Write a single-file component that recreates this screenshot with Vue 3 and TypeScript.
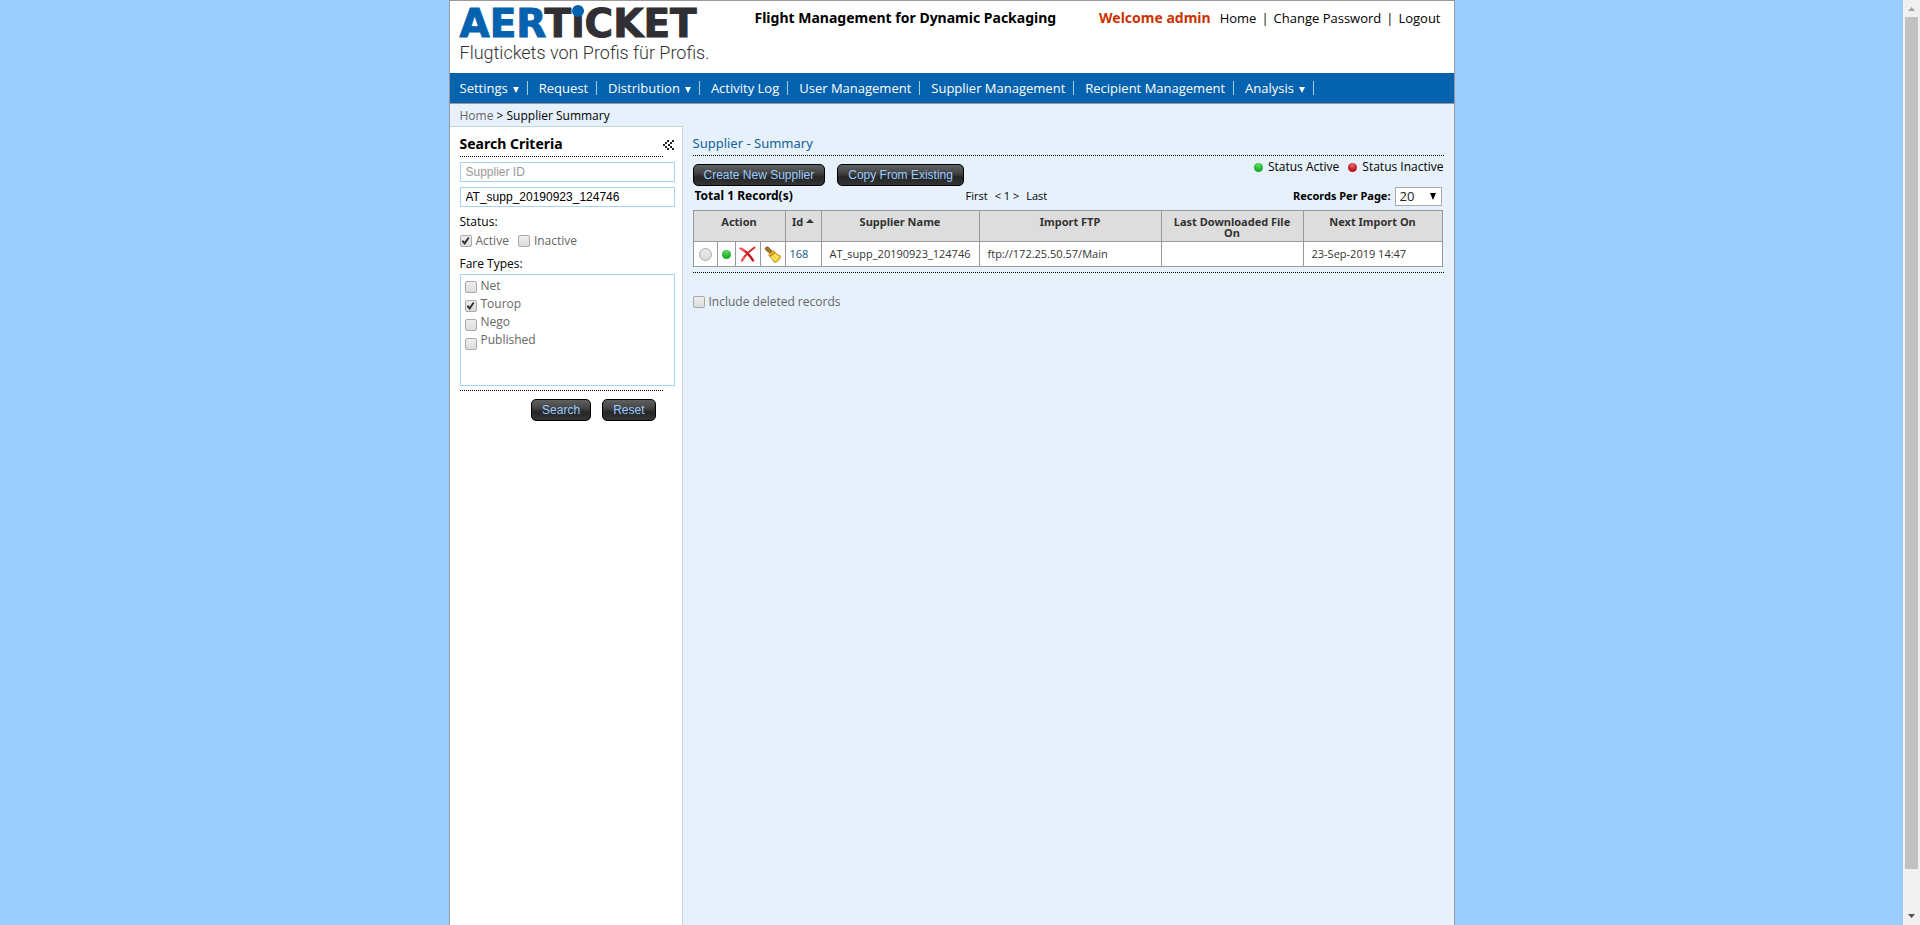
<script setup lang="ts">
import { ref } from 'vue'

interface NavItem {
  label: string
  menu?: boolean
}
interface Option {
  id: string
  label: string
  checked: boolean
}

const navItems: NavItem[] = [
  { label: 'Settings', menu: true },
  { label: 'Request' },
  { label: 'Distribution', menu: true },
  { label: 'Activity Log' },
  { label: 'User Management' },
  { label: 'Supplier Management' },
  { label: 'Recipient Management' },
  { label: 'Analysis', menu: true },
]

const supplierId = ref('')
const supplierName = ref('AT_supp_20190923_124746')
const pageSize = ref('20')
const includeDeleted = ref(false)

const statuses = ref<Option[]>([
  { id: 'status-active', label: 'Active', checked: true },
  { id: 'status-inactive', label: 'Inactive', checked: false },
])
const fareTypes = ref<Option[]>([
  { id: 'fare-net', label: 'Net', checked: false },
  { id: 'fare-tourop', label: 'Tourop', checked: true },
  { id: 'fare-nego', label: 'Nego', checked: false },
  { id: 'fare-published', label: 'Published', checked: false },
])

const suppliers = [
  { id: 168, name: 'AT_supp_20190923_124746', ftp: 'ftp://172.25.50.57/Main', last: '', next: '23-Sep-2019 14:47' },
]
</script>

<template>
  <div class="screen">
    <div class="viewport">
      <div class="page">
        <header class="top">
          <div class="brand">
            <div class="logo"><span class="logo-blue">AER</span>T<span class="logo-i">i</span>CKET</div>
            <div class="tagline">Flugtickets von Profis für Profis.</div>
          </div>
          <h1>Flight Management for Dynamic Packaging</h1>
          <div class="account">
            <strong>Welcome admin</strong>
            <a href="#">Home</a><span>|</span><a href="#">Change Password</a><span>|</span><a href="#">Logout</a>
          </div>
        </header>

        <nav class="menu">
          <a v-for="item in navItems" :key="item.label" href="#">{{ item.label }}<i v-if="item.menu" class="caret"></i></a>
        </nav>

        <div class="crumbs"><a href="#">Home</a> &gt; Supplier Summary</div>

        <div class="columns">
          <aside>
            <form @submit.prevent>
              <div class="criteria-head">
                <h2>Search Criteria</h2>
                <button type="button" class="collapse" aria-label="Collapse">
                  <svg width="11" height="11" viewBox="0 0 11 11" fill="#222">
                    <path d="M4 0h2v2h-2zM2 2h2v2h-2zM0 4h2v2h-2zM2 6h2v2h-2zM4 8h2v2h-2zM9 0h2v2h-2zM7 2h2v2h-2zM5 4h2v2h-2zM7 6h2v2h-2zM9 8h2v2h-2z" />
                  </svg>
                </button>
              </div>
              <input v-model="supplierId" class="field" type="text" placeholder="Supplier ID" aria-label="Supplier ID" />
              <input v-model="supplierName" class="field" type="text" aria-label="Supplier name" />
              <div class="group-label">Status:</div>
              <div class="statuses">
                <label v-for="s in statuses" :key="s.id" :for="s.id"><input :id="s.id" v-model="s.checked" type="checkbox" />{{ s.label }}</label>
              </div>
              <div class="group-label">Fare Types:</div>
              <div class="fares">
                <div class="fare-boxes">
                  <input v-for="f in fareTypes" :id="f.id" :key="f.id" v-model="f.checked" type="checkbox" />
                </div>
                <div class="fare-names">
                  <label v-for="f in fareTypes" :key="f.id" :for="f.id">{{ f.label }}</label>
                </div>
              </div>
              <div class="criteria-foot">
                <button class="dark" type="submit">Search</button>
                <button class="dark" type="reset">Reset</button>
              </div>
            </form>
          </aside>

          <main>
            <h2 class="title">Supplier - Summary</h2>
            <div class="toolbar">
              <button class="dark" type="button">Create New Supplier</button>
              <button class="dark" type="button">Copy From Existing</button>
              <div class="legend">
                <span><i class="dot green"></i>Status Active</span>
                <span><i class="dot red"></i>Status Inactive</span>
              </div>
            </div>
            <div class="pager">
              <strong>Total 1 Record(s)</strong>
              <div class="pages"><a href="#">First</a><span>&lt; 1 &gt;</span><a href="#">Last</a></div>
              <div class="size">
                <label for="page-size">Records Per Page:</label>
                <span class="select">
                  <select id="page-size" v-model="pageSize">
                    <option>20</option>
                    <option>50</option>
                  </select>
                </span>
              </div>
            </div>
            <table>
              <colgroup>
                <col class="c-radio" /><col class="c-dot" /><col class="c-icon" /><col class="c-icon" />
                <col class="c-id" /><col class="c-name" /><col /><col class="c-last" /><col class="c-next" />
              </colgroup>
              <thead>
                <tr>
                  <th colspan="4">Action</th>
                  <th>Id<i class="sort"></i></th>
                  <th>Supplier Name</th>
                  <th>Import FTP</th>
                  <th>Last Downloaded File On</th>
                  <th>Next Import On</th>
                </tr>
              </thead>
              <tbody>
                <tr v-for="s in suppliers" :key="s.id">
                  <td class="act"><input type="radio" name="supplier" :aria-label="s.name" /></td>
                  <td class="act"><i class="dot green"></i></td>
                  <td class="act">
                    <button type="button" aria-label="Delete">
                      <svg width="17" height="17" viewBox="0 0 17 17" fill="none" stroke-linecap="round">
                        <path d="M3.500 3.500C7 5.500 11 9.500 14 14.500" stroke="#c9141c" stroke-width="2.400" />
                        <path d="M15.500 1.500C12 4 6 9 3 14.500" stroke="#d8242a" stroke-width="2" />
                        <path d="M1.500 2.500L5 4.500M3 14.500L5 11.500" stroke="#ee5a5a" stroke-width="2.200" />
                      </svg>
                    </button>
                  </td>
                  <td class="act">
                    <button type="button" aria-label="Clean">
                      <svg width="17" height="17" viewBox="0 0 17 17">
                        <path d="M1.500 1.800L3.800 .8L8.300 5.200L6 7.300L1.300 3.500Z" fill="#a8741c" stroke="#73480c" stroke-width=".8" />
                        <path d="M4.600 8.600L9.500 4.500L11 6.300C12 8 14 9 16.300 9.800C16.500 13 14 16 10 16.300C9 13.500 7.500 11.500 5.600 10.800Z" fill="#f3d12c" stroke="#a8801a" stroke-width=".8" />
                        <path d="M6 9.800L11 6.200" stroke="#c43a1c" stroke-width="1" />
                        <path d="M8.500 10.500L11.500 14.500M11 9L14 12.500" stroke="#fff08a" stroke-width="1.200" />
                      </svg>
                    </button>
                  </td>
                  <td class="id"><a href="#">{{ s.id }}</a></td>
                  <td>{{ s.name }}</td>
                  <td>{{ s.ftp }}</td>
                  <td>{{ s.last }}</td>
                  <td>{{ s.next }}</td>
                </tr>
              </tbody>
            </table>
            <div class="rule"></div>
            <label class="deleted" for="deleted"><input id="deleted" v-model="includeDeleted" type="checkbox" />Include deleted records</label>
          </main>
        </div>
      </div>
    </div>
    <div class="scrollbar" aria-hidden="true">
      <svg width="17" height="17" viewBox="0 0 17 17"><path d="M5 11L8.500 7L12 11Z" fill="#a3a3a3" /></svg>
      <div class="thumb"></div>
      <svg width="17" height="17" viewBox="0 0 17 17"><path d="M5 6L8.500 10L12 6Z" fill="#505050" /></svg>
    </div>
  </div>
</template>

<style>
body { margin: 0; background: #99ccff; }
</style>

<style scoped>
* { box-sizing: border-box; }
.screen {
  display: flex;
  height: 100vh;
  overflow: hidden;
  background: #99ccff;
  font-family: "Open Sans", "Noto Sans", sans-serif;
  font-size: 11px;
  line-height: 16px;
  color: #000;
}
.viewport { flex: 1; display: flex; justify-content: center; }
.page {
  width: 100%;
  max-width: 1006px;
  display: flex;
  flex-direction: column;
  border: 1px solid #999;
  border-bottom: 0;
  background: #e6f1fb;
}
a { color: inherit; text-decoration: none; }
h1, h2 { margin: 0; }
button, input, select { font-family: inherit; margin: 0; }
button { cursor: pointer; }
strong, th, h1, h2 { font-family: "Noto Sans", "Open Sans", sans-serif; }

/* header */
.top {
  display: flex;
  height: 72px;
  padding: 8px 13px 0 10px;
  background: #fff;
  font-size: 13px;
  line-height: 18px;
}
.brand { width: 295px; }
.logo {
  height: 32px;
  font-family: "DejaVu Sans", sans-serif;
  font-size: 39px;
  font-weight: 700;
  line-height: 30px;
  color: #302f34;
  white-space: nowrap;
  -webkit-text-stroke: 1px;
}
.logo-blue { color: #0562ae; }
.logo-i { position: relative; }
.logo-i::before {
  content: "";
  position: absolute;
  left: 1px;
  top: 4px;
  width: 12px;
  height: 12px;
  border-radius: 50%;
  background: #0562ae;
}
.tagline {
  font-family: Roboto, "Liberation Sans", sans-serif;
  font-size: 18px;
  font-weight: 300;
  line-height: 24px;
  color: #333;
  white-space: nowrap;
}
h1 { font-size: 14px; line-height: 18px; white-space: nowrap; }
.account { margin-left: auto; display: flex; gap: 5px; white-space: nowrap; }
.account strong { margin-right: 4px; font-size: 14px; color: #cc3300; }

/* menu bar */
.menu {
  display: flex;
  align-items: center;
  height: 31px;
  padding-left: 10px;
  background: #0562ae;
  border-bottom: 1px solid #999;
  color: #fff;
  font-size: 13px;
  line-height: 14px;
}
.menu a { display: flex; align-items: center; padding-right: 8px; margin-right: 11px; border-right: 1px solid #a9cbe6; white-space: nowrap; }
.caret { margin: 3px 0 0 5px; border: 3px solid transparent; border-top: 6px solid #fff; border-bottom: 0; }

.crumbs { height: 22px; padding-left: 10px; font-size: 12px; line-height: 24px; }
.crumbs a { color: #666; }

.columns { flex: 1; display: flex; }

/* search panel */
aside {
  width: 233px;
  padding: 8px 7px 0 10px;
  background: #fff;
  border: solid #c8d4df;
  border-width: 1px 1px 0 0;
}
.criteria-head { position: relative; width: 203px; height: 22px; margin-bottom: 5px; border-bottom: 1px dotted #000; }
.criteria-head h2 { font-size: 14px; line-height: 18px; }
.collapse { position: absolute; right: -11px; top: 5px; padding: 0; border: 0; background: none; line-height: 0; }
.field {
  display: block;
  width: 100%;
  height: 20px;
  margin-bottom: 5px;
  padding: 0 5px;
  border: 1px solid #a9d3f5;
  font-family: "Liberation Sans", sans-serif;
  font-size: 12px;
  color: #000;
}
.field::placeholder { color: #999; }
.group-label { margin-top: 6px; font-size: 12px; line-height: 18px; }
.statuses { display: flex; gap: 9px; margin-top: 2px; height: 16px; }
label { font-size: 12px; }
.statuses label, .deleted { display: flex; align-items: center; gap: 4px; color: #666; }
.fares { height: 112px; margin-top: 1px; padding: 2px 4px; border: 1px solid #a9d3f5; display: flex; gap: 4px; }
.fare-boxes { display: flex; flex-direction: column; gap: 7px; padding-top: 4px; }
.fare-names { display: flex; flex-direction: column; color: #666; line-height: 18px; }
.criteria-foot {
  width: 203px;
  margin-top: 4px;
  padding: 8px 7px 0 0;
  border-top: 1px dotted #000;
  display: flex;
  justify-content: flex-end;
  gap: 11px;
}

input[type="checkbox"] {
  appearance: none;
  flex: none;
  position: relative;
  width: 12px;
  height: 12px;
  border: 1px solid #aaa;
  border-radius: 2px;
  background: linear-gradient(#eee, #dcdcdc);
}
input[type="checkbox"]:checked::after {
  content: "";
  position: absolute;
  inset: 1px;
  background: #333;
  clip-path: polygon(0 55%, 18% 38%, 38% 58%, 82% 0, 100% 14%, 42% 100%);
}
input[type="radio"] {
  appearance: none;
  display: block;
  width: 13px;
  height: 13px;
  border: 1px solid #aaa;
  border-radius: 50%;
  background: linear-gradient(#eaeaea, #dcdcdc);
}

.dark {
  height: 22px;
  padding: 0 10px;
  border: 1px solid #000;
  border-radius: 5px;
  background: linear-gradient(#606060, #454545 40%, #262626 60%, #343434);
  font-family: "Liberation Sans", sans-serif;
  font-size: 12px;
  line-height: 18px;
  color: #99ccff;
  white-space: nowrap;
}

/* results */
main { flex: 1; padding: 8px 10px 0; }
.title { height: 22px; border-bottom: 1px dotted #000; font-size: 13px; font-weight: 400; line-height: 18px; color: #0f6299; }
.toolbar { display: flex; gap: 12px; margin-top: 8px; height: 22px; }
.legend { margin-left: auto; display: flex; gap: 9px; font-size: 12px; line-height: 16px; margin-top: -5px; }
.legend span { display: flex; align-items: center; gap: 5px; height: 16px; }
.dot { display: block; width: 9px; height: 9px; border-radius: 50%; }
.green { background: radial-gradient(circle at 50% 25%, #5fdc62, #14ab24 70%); }
.red { background: radial-gradient(circle at 50% 25%, #e46a6a, #b80f14 70%); }
.pager { display: grid; grid-template-columns: 273px auto 1fr; align-items: center; height: 20px; margin-bottom: 4px; }
.pager strong { padding-left: 2px; font-size: 12px; }
.pages { display: flex; gap: 7px; }
.size { display: flex; align-items: center; justify-content: flex-end; gap: 4px; padding-right: 2px; }
.size label { font-family: "Noto Sans", sans-serif; font-size: 11px; font-weight: 700; }
.select { position: relative; display: block; width: 47px; height: 19px; }
.select::after {
  content: "";
  position: absolute;
  right: 6px;
  top: 6px;
  border: 3px solid transparent;
  border-top: 7px solid #000;
  border-bottom: 0;
  pointer-events: none;
}
select {
  appearance: none;
  display: block;
  width: 100%;
  height: 100%;
  padding: 0 4px;
  border: 1px solid #a9a9a9;
  background: #fff;
  font-size: 13px;
  line-height: 16px;
  color: #222;
}

table { width: calc(100% - 1px); border-collapse: collapse; table-layout: fixed; }
.c-radio { width: 24px; }
.c-dot { width: 18px; }
.c-icon { width: 25px; }
.c-id { width: 36px; }
.c-name { width: 158px; }
.c-last { width: 142px; }
.c-next { width: 139px; }
th, td { border: 1px solid #999; color: #333; }
th { height: 31px; padding: 5px 8px 3px; background: #ddd; line-height: 11px; vertical-align: top; white-space: normal; }
th:nth-child(2) { padding-left: 4px; padding-right: 4px; }
td { height: 25px; padding: 0 8px; background: #fff; font-size: 11px; white-space: nowrap; }
td.act { padding: 0; }
td.act > * { margin: 0 auto; }
td.act button { display: block; padding: 0; border: 0; background: none; line-height: 0; }
td.id { padding: 0 4px; font-size: 11px; color: #0f5585; }
td.id a { color: #0f5585; }
.sort { display: inline-block; margin: 0 0 3px 3px; border: 4px solid transparent; border-bottom: 4px solid #333; border-top: 0; }
.rule { margin-top: 5px; border-top: 1px dotted #000; }
.deleted { margin-top: 21px; }

/* scroll bar */
.scrollbar { flex: none; width: 17px; display: flex; flex-direction: column; background: #f0f0f0; }
.thumb { flex: 1; margin: 0 2px 39px; background: #c1c1c1; }
</style>
